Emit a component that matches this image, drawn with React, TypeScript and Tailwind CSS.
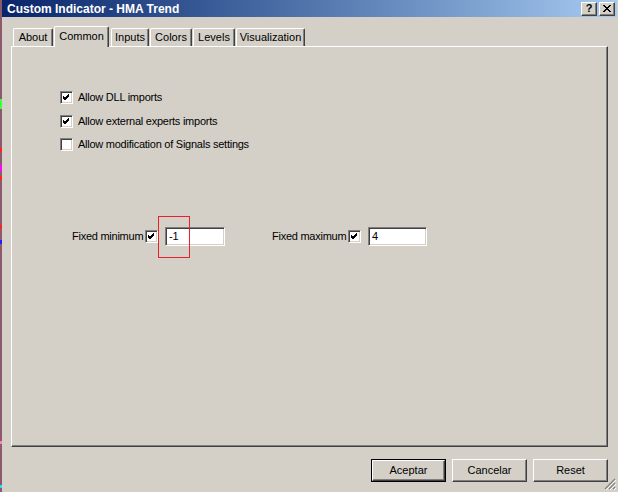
import React from "react"

const raised =
  "border border-t-white border-l-white border-r-[#404040] border-b-[#404040] shadow-[inset_-1px_-1px_0_#808080]"
const sunken =
  "border border-t-[#808080] border-l-[#808080] border-r-white border-b-white shadow-[inset_1px_1px_0_#404040,inset_-1px_-1px_0_#d4d0c8]"

function Check({ checked }: { checked?: boolean }) {
  return (
    <div className={`w-[13px] h-[13px] bg-white shrink-0 flex items-center justify-center ${sunken}`}>
      {checked && (
        <svg width="7" height="7" viewBox="0 0 7 7">
          <path d="M0 2 L2 4 L6 0 M0 3 L2 5 L6 1 M0 4 L2 6 L6 2" stroke="#000" strokeWidth="1" fill="none" shapeRendering="crispEdges" />
        </svg>
      )}
    </div>
  )
}

function Tab({ label, w, ml, active }: { label: string; w: number; ml: string; active?: boolean }) {
  return (
    <div
      style={{ width: w }}
      className={`${ml} flex justify-center rounded-t-[2px] border-t border-l border-t-white border-l-white border-r border-r-[#404040] shadow-[inset_-1px_0_0_#808080] bg-[#d4d0c8] ${
        active ? "h-[21px] pt-[2px] -mb-[1px] relative z-10" : "h-[18px] pt-[1px]"
      }`}>
      <span className="leading-[14px] whitespace-nowrap">{label}</span>
    </div>
  )
}

function Btn({ label, def }: { label: string; def?: boolean }) {
  const inner = (
    <div className={`w-full h-full flex items-center justify-center ${raised}`}>{label}</div>
  )
  return def ? (
    <div className="w-[75px] h-[23px] border border-black">{inner}</div>
  ) : (
    <div className="w-[75px] h-[23px]">{inner}</div>
  )
}

export default function App() {
  return (
    <div className="w-[618px] h-[492px] bg-[#d4d0c8] flex overflow-hidden text-[11px] text-black font-['Liberation_Sans',Arial,sans-serif]">
      <div className="w-[2px] h-full bg-[#8d5a6c] relative shrink-0">
        <div className="absolute left-0 top-[99px] w-[2px] h-[10px] bg-[#40ff40]" />
        <div className="absolute left-0 top-[148px] w-[2px] h-[4px] bg-[#ff2020]" />
        <div className="absolute left-0 top-[165px] w-[2px] h-[6px] bg-[#ff00ff]" />
        <div className="absolute left-0 top-[176px] w-[2px] h-[4px] bg-[#ff2020]" />
        <div className="absolute left-0 top-[225px] w-[2px] h-[4px] bg-[#ff2020]" />
        <div className="absolute left-0 top-[240px] w-[2px] h-[4px] bg-[#2020ff]" />
        <div className="absolute left-0 top-[441px] w-[2px] h-[3px] bg-[#ff80c0]" />
        <div className="absolute left-0 top-[485px] w-[2px] h-[3px] bg-[#20e0ff]" />
      </div>
      <div className="flex-1 flex flex-col relative">
        <div className="h-[17px] mr-[1px] flex items-center bg-gradient-to-r from-[#0a246a] to-[#a6caf0]">
          <span className="ml-[5px] text-white font-bold text-[12px] leading-none">Custom Indicator - HMA Trend</span>
          <div className="ml-auto mr-[2px] flex gap-[2px]">
            <div className={`w-[16px] h-[14px] bg-[#d4d0c8] flex items-center justify-center font-bold text-[11px] leading-none ${raised}`}>?</div>
            <div className={`w-[16px] h-[14px] bg-[#d4d0c8] flex items-center justify-center ${raised}`}>
              <svg width="8" height="7" viewBox="0 0 8 7">
                <path d="M0 0 L7 7 M1 0 L8 7 M7 0 L0 7 M8 0 L1 7" stroke="#000" strokeWidth="1" shapeRendering="crispEdges" />
              </svg>
            </div>
          </div>
        </div>
        <div className="mt-[9px] ml-[9px] flex items-end">
          <Tab label="About" w={40} ml="ml-[2px]" />
          <Tab label="Common" w={55} ml="ml-[1px]" active />
          <Tab label="Inputs" w={38} ml="ml-[2px]" />
          <Tab label="Colors" w={42} ml="ml-[1px]" />
          <Tab label="Levels" w={42} ml="ml-[1px]" />
          <Tab label="Visualization" w={69} ml="ml-[1px]" />
        </div>
        <div className={`ml-[9px] w-[597px] h-[401px] relative tracking-[-0.25px] ${raised}`}>
          <div className="flex flex-col pl-[48px] pt-[44px] gap-[11px]">
            <div className="flex items-center gap-[5px] h-[13px]">
              <Check checked />
              <span>Allow DLL imports</span>
            </div>
            <div className="flex items-center gap-[5px] h-[13px]">
              <Check checked />
              <span>Allow external experts imports</span>
            </div>
            <div className="flex items-center gap-[5px] h-[13px] -mt-[1px]">
              <Check />
              <span>Allow modification of Signals settings</span>
            </div>
          </div>
          <div className="flex items-center ml-[60px] mt-[76px] h-[19px]">
            <span className="w-[73px] shrink-0 whitespace-nowrap">Fixed minimum</span>
            <Check checked />
            <div className={`ml-[7px] w-[60px] h-[19px] shrink-0 bg-white flex items-center pl-[3px] ${sunken}`}>-1</div>
            <span className="ml-[47px] w-[76px] shrink-0 whitespace-nowrap">Fixed maximum</span>
            <Check checked />
            <div className={`ml-[7px] w-[59px] h-[19px] shrink-0 bg-white flex items-center pl-[3px] ${sunken}`}>4</div>
          </div>
          <div className="absolute left-[146px] top-[169px] w-[32px] h-[42px] border border-[#e8202a]" />
        </div>
        <div className="mt-[12px] ml-[369px] flex gap-[6px]">
          <Btn label="Aceptar" def />
          <Btn label="Cancelar" />
          <Btn label="Reset" />
        </div>
        <svg className="absolute right-[2px] bottom-[2px]" width="12" height="12" viewBox="0 0 12 12">
          <path d="M11 1 L1 11 M11 5 L5 11 M11 9 L9 11" stroke="#808080" strokeWidth="1.2" />
          <path d="M12 2 L2 12 M12 6 L6 12 M12 10 L10 12" stroke="#ffffff" strokeWidth="1" />
        </svg>
      </div>
    </div>
  )
}
